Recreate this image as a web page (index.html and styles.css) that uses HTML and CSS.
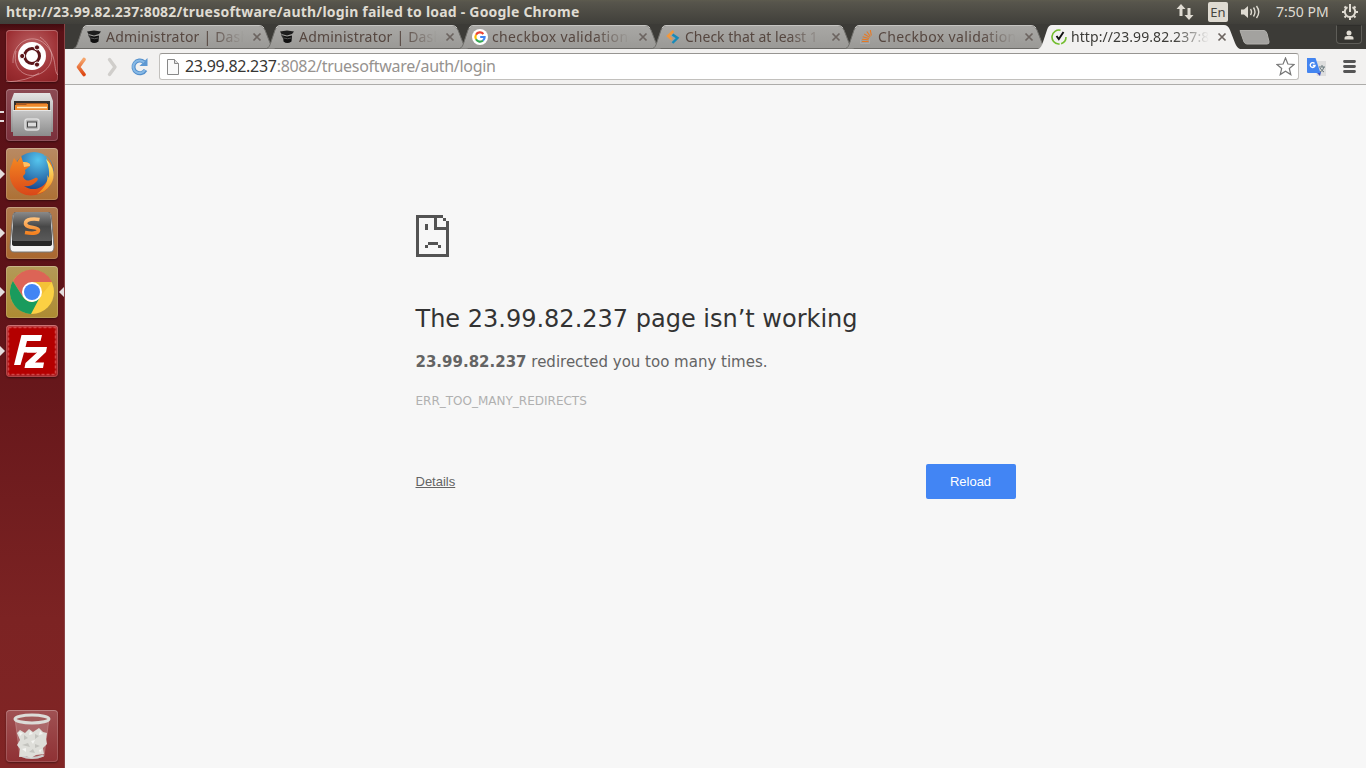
FILE: index.html
```
<!DOCTYPE html>
<html lang="en">
<head>
<meta charset="utf-8">
<title>23.99.82.237</title>
<link rel="stylesheet" href="styles.css">
</head>
<body>
<svg width="0" height="0" class="defs">
<defs>
<linearGradient id="tabfill" x2="0" y2="1"><stop stop-color="#a9a8a5"/><stop offset="1" stop-color="#9a9996"/></linearGradient>
<linearGradient id="orange" x2="0" y2="1"><stop stop-color="#f5a56c"/><stop offset="1" stop-color="#dd4814"/></linearGradient>
<linearGradient id="silver" x2="0" y2="1"><stop stop-color="#e4e4e4"/><stop offset="1" stop-color="#8d8d8d"/></linearGradient>
<linearGradient id="front" x2="0" y2="1"><stop stop-color="#c6c6c6"/><stop offset="1" stop-color="#8c8c8c"/></linearGradient>
<linearGradient id="fox" x2="0" y2="1"><stop stop-color="#f58b22"/><stop offset="1" stop-color="#d94719"/></linearGradient>
<linearGradient id="foxtail" x2="0" y2="1"><stop stop-color="#fff27a"/><stop offset="1" stop-color="#f28a1b"/></linearGradient>
<radialGradient id="globe" cx=".6" cy=".2" r=".8"><stop stop-color="#55c5ee"/><stop offset="1" stop-color="#143f88"/></radialGradient>
<linearGradient id="dark" x2="0" y2="1"><stop stop-color="#8a8a8a"/><stop offset=".5" stop-color="#484848"/><stop offset="1" stop-color="#5a5a5a"/></linearGradient>
<linearGradient id="amber" x2="0" y2="1"><stop stop-color="#ffc078"/><stop offset="1" stop-color="#f58220"/></linearGradient>
<symbol id="shape" viewBox="0 0 202 25"><path d="M.5 24.500C3 24 4 21 5 18L9 6Q10.500 1.500 14 1.500H186Q190 1.500 192 6L197 19Q199 24 201.500 24.500" fill="url(#tabfill)" stroke="#706f6b"/><path d="M10 4Q11.500 1.500 14 1.500H186Q189 1.500 191 4" fill="none" stroke="#c5c4c1"/></symbol>
<symbol id="shape-on" viewBox="0 0 202 25"><path d="M0 25C3 24 4 21 5 18L9 6Q10.500 1 14 1H186Q190 1 192 6L197 19Q199 24 202 25Z" fill="#f2f1f0"/></symbol>
<symbol id="x" viewBox="0 0 10 10"><path d="M1.500 1.500l7 7m0-7l-7 7" stroke="currentColor" stroke-width="1.700"/></symbol>
<symbol id="cap" viewBox="0 0 16 16"><path d="M1 2.500L8 1.500 15 2.500l-2 2.500-5 1.500L2.500 5z" fill="#1d1d1d"/><path d="M4 6.500l4 1 5-1-.5 6Q8 15.500 4.500 12.500z" fill="#101010"/><path d="M2 5l2.500 2L4 9.500 2.500 7z" fill="#333"/><path d="M5 9q3.500 1.500 7 0" stroke="#555" fill="none"/></symbol>
</defs>
</svg>

<header class="menubar">
  <h1 class="wintitle">http://23.99.82.237:8082/truesoftware/auth/login failed to load - Google Chrome</h1>
  <div class="indicators">
    <svg class="net" width="18" height="18" viewBox="0 0 18 18"><path d="M5 1l4.500 5H6.500v7h-3V6H.5zM13 17l-4.500-5h3V5h3v7h3z" fill="#dfdbd2"/></svg>
    <span class="lang">En</span>
    <svg class="vol" width="20" height="16" viewBox="0 0 20 16"><path d="M0 5.500h3L7 2v12L3 10.500H0z" fill="#dfdbd2"/><path d="M9.500 5q2 3 0 6M12.500 3.500q3 4.500 0 9M15.500 2q4.500 6 0 12" fill="none" stroke="#dfdbd2" stroke-width="1.400"/></svg>
    <span class="clock">7:50 PM</span>
    <svg class="gear" width="18" height="18" viewBox="0 0 18 18" fill="none" stroke="#dfdbd2"><path d="M6.500 4.200A5.200 5.200 0 1 0 11.500 4.200" stroke-width="2"/><path d="M9 1v8" stroke-width="2"/><path d="M5 5L3.500 3.500M13 5L14.500 3.500M3.800 9H1M14.200 9H17M5 13L3.500 14.500M13 13L14.500 14.500M9 14.500V17" stroke-width="2"/></svg>
  </div>
</header>

<div class="desktop">
<nav class="launcher">
  <div class="tile ubuntu"><svg viewBox="0 0 52 52"><g fill="none" stroke="#f0c5c5" opacity=".5"><path d="M7 33C6 12 26 2 39 14S47 41 52 45M10 21C5 42 24 51 37 42S48 17 34 7M0 52Q22 51 33 43"/></g><circle cx="26" cy="26" r="14" fill="#fff"/><circle cx="26" cy="26" r="7.500" fill="none" stroke="#5b1519" stroke-width="3"/><g fill="#5b1519" stroke="#fff" stroke-width="1"><circle cx="16.200" cy="26" r="2.600"/><circle cx="31" cy="17.400" r="2.600"/><circle cx="31" cy="34.600" r="2.600"/></g></svg></div>
  <div class="tile files two"><svg viewBox="0 0 52 52"><path d="M8 4h36l3 8v31H5V12z" fill="url(#silver)"/><path d="M8 12h36v11H8z" fill="#33302e"/><path d="M10 14h31v9H10z" fill="#a95b23"/><path d="M9 16h11l1-1h21v7H9z" fill="#f08a2c"/><path d="M11 18.500h30" stroke="#fff0c8" stroke-width="1.500"/><path d="M7 21h38v26H7z" fill="url(#front)"/><path d="M7 21.500h38" stroke="#e6e6e6"/><rect x="19" y="30" width="14" height="11" rx="2.500" fill="#b5b5b5" stroke="#dedede" stroke-width="1.500"/><rect x="21.500" y="33" width="9" height="5" fill="#ddd" stroke="#444"/></svg></div>
  <div class="tile firefox run"><svg viewBox="0 0 52 52"><circle cx="28" cy="24" r="20" fill="url(#globe)"/><path d="M38 7C49 14 51 31 42 40 36 47 24 50 15 45 4 39 1 26 6 16L8 10l3 4 4-6 2 6c4 0 8 1 7 4l-5 4c1 3 0 4-2 6 1 5 6 6 12 2 3-1 4 2 1 4-4 4-8 5-12 4 8 6 20 3 24-7 3-8 2-16-3-24z" fill="url(#fox)"/><path d="M40 11c8 8 10 17 5 25-4 6-9 9-14 10 8-6 12-14 10-19l2 3q1-9-3-19z" fill="url(#foxtail)"/><path d="M16 9l1 5c4 0 8 1 7 4l-6 1z" fill="#ffc064"/></svg></div>
  <div class="tile sublime run"><svg viewBox="0 0 52 52"><path d="M9 6h34q2 0 2.300 3L48 40q0 5-4 5H8q-4 0-4-5L6.700 9Q7 6 9 6z" fill="#f3f3f3" stroke="#777"/><path d="M10 5h32q2 0 2.200 2L46 34v3q0 2-3 2H9q-3 0-3-2v-3L7.800 7Q8 5 10 5z" fill="#262626"/><path d="M10 5h32q2 0 2.200 2L46 32q0 2-3 2H9q-3 0-3-2L7.800 7Q8 5 10 5z" fill="url(#dark)"/><path d="M33.500 12.500c-5-1-14-1-14 4 0 5 13 3 13 6.500 0 4-8 3.500-13.500 2.500" fill="none" stroke="url(#amber)" stroke-width="3.600"/></svg></div>
  <div class="tile chrome run focus"><svg viewBox="0 0 52 52"><circle cx="26" cy="26" r="22" fill="#fbd043"/><path d="M6.900 15A22 22 0 0 1 46 16H26L17 31z" fill="#dc6456"/><path d="M6.900 15A22 22 0 0 0 25 48l9-17q-9 10-17 0z" fill="#199b5d"/><path d="M34 31L46 16H26z" fill="#f4c137"/><circle cx="26" cy="26" r="10" fill="#fff"/><circle cx="26" cy="26" r="8" fill="#4285f4"/></svg></div>
  <div class="tile filezilla run"><svg viewBox="0 0 52 52"><rect x="2.500" y="2.500" width="47" height="47" fill="#b40000" stroke="#d04545" stroke-width="1.500" stroke-dasharray="3 2"/><path d="M15.500 10H36l-1.500 6H21l-1.500 6H31l-1 5.500H18L14.500 40H8z" fill="#fff"/><path d="M22 22h19l-1 5-11 10.500h9L37 43H18.500l1-5L31 27.500H21z" fill="#fff"/></svg></div>
  <div class="tile trash"><svg viewBox="0 0 52 52"><path d="M9 9l5 37q12 5 24 0l5-37z" fill="#d5b5b5" fill-opacity=".3" stroke="#c99" stroke-opacity=".5"/><path d="M14.500 45.500q11.500 5 23 0" fill="none" stroke="#ccc" stroke-width="2"/><path d="M11 23l3-3 5 3 4-4 4 3 6-4 4 4 4 1-1 6 1 5-4 4 1 6-8 1-5 3-5-2-7 1 1-8-3-4 3-5z" fill="#deded9"/><g fill="#c3c3be"><path d="M18 25l4 3-4 2zM29 24l4 2-4 3zM16 35l6-2 2 4zM29 34l5 2-5 2zM23 42l4-3 2 4z"/></g><g fill="#f4f4f1"><path d="M13 22l4 1-3 3zM24 21l3 3-4 1zM34 21l3 3-4 1zM16 39l4-1v4zM25 31l4-1-2 4zM33 40l3-1-2 4z"/></g><ellipse cx="26" cy="9" rx="17" ry="4" fill="#a15b5b" stroke="#dcdcd8" stroke-width="3"/></svg></div>
</nav>

<section class="browser">
  <div class="tabs">
    <div class="tab"><svg class="shape"><use href="#shape"/></svg><svg class="fav"><use href="#cap"/></svg><span class="label adm">Administrator | Dash</span><svg class="close"><use href="#x"/></svg></div>
    <div class="tab"><svg class="shape"><use href="#shape"/></svg><svg class="fav"><use href="#cap"/></svg><span class="label adm">Administrator | Dash</span><svg class="close"><use href="#x"/></svg></div>
    <div class="tab"><svg class="shape"><use href="#shape"/></svg><svg class="fav" viewBox="0 0 16 16"><circle cx="8" cy="8" r="8" fill="#fff"/><g fill="none" stroke-width="2.200"><path d="M4 5.700A4.600 4.600 0 0 1 11.400 4.900" stroke="#ea4335"/><path d="M4 5.700A4.600 4.600 0 0 0 4 10.300" stroke="#fbbc05"/><path d="M4 10.300A4.600 4.600 0 0 0 11 11.500" stroke="#34a853"/><path d="M11 11.500Q12.700 10 12.600 8H8.200" stroke="#4285f4"/></g></svg><span class="label chk">checkbox validation</span><svg class="close"><use href="#x"/></svg></div>
    <div class="tab"><svg class="shape"><use href="#shape"/></svg><svg class="fav" viewBox="0 0 16 16" fill="none" stroke-width="2.400"><path d="M8.500 2L3 7l4 3.500" stroke="#f0983e"/><path d="M7.500 5.500l5 3.500-5 5" stroke="#188ab8"/></svg><span class="label">Check that at least 1</span><svg class="close"><use href="#x"/></svg></div>
    <div class="tab"><svg class="shape"><use href="#shape"/></svg><svg class="fav" viewBox="0 0 16 16" fill="none"><path d="M2.500 10.500v4h9v-4" stroke="#aaa"/><path d="M4 12.500h6.500M4 10.300l6.500.5M4.700 7.700l6.200 1.800M6.200 5l5.500 3.400M8.800 2.500l3.600 5M12.300 1l1 5.500" stroke="#e87922" stroke-width="1.100"/></svg><span class="label chk">Checkbox validation</span><svg class="close"><use href="#x"/></svg></div>
    <div class="tab on"><svg class="shape"><use href="#shape-on"/></svg><svg class="fav" viewBox="0 0 16 16" fill="none"><path d="M9.500 1.200A7 7 0 1 0 15 8" stroke="#72bd2d" stroke-width="1.600" stroke-dasharray="24 1.500"/><path d="M5.500 7l2.300 3 4.700-7" stroke="#111" stroke-width="1.900"/></svg><span class="label url">http://23.99.82.237:8</span><svg class="close"><use href="#x"/></svg></div>
    <svg class="newtab" width="31" height="15" viewBox="0 0 31 15"><path d="M1 .5h24q2 0 3 3l2 8q.5 2.500-2 2.500H8q-2 0-3-2z" fill="#a3a29f" stroke="#b0afab"/></svg>
    <div class="user"><svg width="10" height="10" viewBox="0 0 10 10"><circle cx="5" cy="3" r="2.500" fill="#dfdbd2"/><path d="M.5 9.500V8q0-2 3-2h3q3 0 3 2v1.500z" fill="#dfdbd2"/></svg></div>
  </div>
  <div class="toolbar">
    <svg class="back" width="12" height="20" viewBox="0 0 12 20"><path d="M9 2.500L3.500 10 9 17.500" fill="none" stroke="url(#orange)" stroke-width="3.600" stroke-linejoin="round" stroke-linecap="round"/></svg>
    <svg class="fwd" width="12" height="20" viewBox="0 0 12 20"><path d="M2.500 2.500L8 10l-5.500 7.500" fill="none" stroke="#d0cecb" stroke-width="3.400" stroke-linejoin="round" stroke-linecap="round"/></svg>
    <svg class="reload" width="19" height="19" viewBox="0 0 19 19"><path d="M14 5A6.400 6.400 0 1 0 15.500 13" fill="none" stroke="#5590cc" stroke-width="4"/><path d="M17.500 1v8h-8z" fill="#5d98d2"/><path d="M14 5.300A6.300 6.300 0 1 0 15 13" fill="none" stroke="#87b9e5" stroke-width="2"/></svg>
    <div class="omnibox">
      <svg width="12" height="16" viewBox="0 0 12 16"><path d="M.5.500h7l4 4v11H.5z" fill="#fafafa" stroke="#888"/><path d="M7.500.500v4h4" fill="#ddd" stroke="#888"/></svg>
      <span class="address"><b>23.99.82.237</b>:8082/truesoftware/auth/login</span>
      <svg class="star" width="19" height="19" viewBox="0 0 19 19"><path d="M9.500 1l2.400 6 6.100.5-4.700 4 1.500 6.100-5.300-3.400-5.300 3.400 1.500-6.100L1 7.500 7.100 7z" fill="#fff" stroke="#777" stroke-width="1.200"/></svg>
    </div>
    <svg class="translate" width="20" height="20" viewBox="0 0 20 20"><path d="M6 4h13v15H10z" fill="#dedede"/><path d="M9 15h5l-1 4z" fill="#3f51c0"/><path d="M0 1h8.500l5 15H1q-1 0-1-1z" fill="#4485f0"/><path d="M7.500 6.500A2.400 2.400 0 1 0 8 8.500H5.800" fill="none" stroke="#fff" stroke-width="1.400"/><path d="M12 10h6M15 8v2M17 10q-1 4-4 5M13 11q2 3 4 4" fill="none" stroke="#66777b"/></svg>
    <svg class="burger" width="13" height="13" viewBox="0 0 13 13"><path d="M1.500 1.500h10M1.500 6.500h10M1.500 11.500h10" stroke="#555" stroke-width="2.800" stroke-linecap="round"/></svg>
  </div>
  <main class="page">
    <div class="error">
      <svg class="sad" width="33" height="42" viewBox="0 0 33 42" shape-rendering="crispEdges"><path d="M0 0h27v3h-6v9h9v-6h3v36H0zM3 3v36h27V15H18V3zM27 3h3v3h-3zM9 9h3v6H9zM12 27h10v3H12zM9 30h3v3H9zM22 30h3v3h-3z" fill="#535353" fill-rule="evenodd"/></svg>
      <h2>The 23.99.82.237 page isn’t working</h2>
      <p class="reason"><strong>23.99.82.237</strong> redirected you too many times.</p>
      <div class="code">ERR_TOO_MANY_REDIRECTS</div>
      <div class="actions"><a class="details">Details</a><button class="retry">Reload</button></div>
    </div>
  </main>
</section>
</div>
</body>
</html>
```
FILE: styles.css
```
* { box-sizing: border-box; }
body { margin: 0; width: 1366px; height: 768px; overflow: hidden; display: flex; flex-direction: column; font-family: "Noto Sans", "Open Sans", sans-serif; background: #3c3b37; }
.defs { position: absolute; }
svg { display: block; flex: none; }

.menubar { height: 24px; flex: none; display: flex; align-items: center; justify-content: space-between; padding: 0 7px 0 6px; background: linear-gradient(#5d5b4e 0, #57554c 10%, #403f3a 100%); color: #dfdbd2; }
.wintitle { margin: 0; font-size: 14px; line-height: 24px; font-weight: 700; white-space: nowrap; letter-spacing: 0.210px; }
.indicators { display: flex; align-items: center; }
.lang { width: 20px; height: 20px; margin-left: 14px; border-radius: 2px; background: #dfdbd2; color: #45443f; font-size: 13px; line-height: 20px; text-align: center; }
.vol { margin-left: 13px; }
.clock { width: 54px; margin-left: 15px; font-size: 14px; line-height: 24px; white-space: nowrap; letter-spacing: 0; }
.gear { margin-left: 11px; }

.desktop { flex: 1; min-height: 0; display: flex; }
.launcher { width: 65px; flex: none; display: flex; flex-direction: column; gap: 7px; padding: 6px 0 6px 6px; background: linear-gradient(#420b0f 0, #5b1217 8px, #5c1218 30%, #64161a 45%, #7c2323 80%, #812525 100%); border-right: 1px solid #8b4345; }
.tile { position: relative; width: 52px; height: 52px; flex: none; border-radius: 4px; box-shadow: inset 0 0 0 1px rgba(255,255,255,.16), inset 0 1px 0 rgba(255,255,255,.15), 0 1px 2px rgba(0,0,0,.4); }
.tile svg { width: 52px; height: 52px; }
.ubuntu { background: radial-gradient(circle at 50% 35%, #bd6668, #9c2e32 65%, #8c2226); }
.files { background: linear-gradient(#8c4a53, #7b2f3b); }
.firefox { background: linear-gradient(#b98a63, #ad7135); }
.sublime { background: linear-gradient(#b07b4f, #a9672f); }
.chrome { background: linear-gradient(#b39a58, #ad8b32); }
.filezilla { background: linear-gradient(#b43a3d, #a32023); }
.trash { margin-top: auto; background: linear-gradient(#a05153, #8f3134); }
.run::before { content: ""; position: absolute; left: -6px; top: 21px; border: 5px solid transparent; border-left-color: #e4dede; border-right: 0; }
.two::before { content: ""; position: absolute; left: -6px; top: 22px; width: 4px; height: 7px; border: solid #e4dede; border-width: 2px 0; }
.focus::after { content: ""; position: absolute; right: -6px; top: 21px; border: 5px solid transparent; border-right-color: #e4dede; border-left: 0; }

.browser { flex: 1; min-width: 0; display: flex; flex-direction: column; }
.tabs { height: 25px; flex: none; display: flex; padding-left: 8px; background: #3c3b37; }
.tab { position: relative; width: 193px; flex: none; display: flex; align-items: center; padding-left: 13px; color: #564740; }
.tab > * { position: relative; }
.tab .shape { position: absolute; left: 0; top: 0; width: 202px; height: 25px; }
.tab.on { z-index: 2; color: #3c3b37; }
.fav { width: 16px; height: 16px; }
.label { width: 142px; margin-left: 4px; white-space: nowrap; font-size: 14px; line-height: 25px; -webkit-mask-image: linear-gradient(90deg, #000 103px, transparent 138px); mask-image: linear-gradient(90deg, #000 103px, transparent 138px); }
.adm { letter-spacing: 0.200px; }
.chk { letter-spacing: 0.350px; }
.url { letter-spacing: 0.080px; }
.close { width: 10px; height: 10px; margin-left: 4px; color: #6c6460; }
.newtab { margin: 6px 0 0 8px; }
.user { width: 26px; height: 19px; margin: 1px 4px 0 auto; display: flex; align-items: center; justify-content: center; border: 1px solid #5e5d58; border-top-color: #2f2e2b; border-radius: 0 0 4px 4px; background: #353430; }

.toolbar { height: 36px; flex: none; display: flex; align-items: center; padding: 0 10px; background: #f2f1f0; border-bottom: 1px solid #adacaa; }
.fwd { margin-left: 20px; }
.reload { margin-left: 11px; }
.omnibox { width: 1140px; height: 27px; margin-left: 10px; display: flex; align-items: center; padding: 0 3px 0 7px; background: #fff; border: 1px solid #c2c0bd; border-top-color: #979592; border-radius: 3px; }
.address { flex: 1; margin-left: 6px; font-size: 16px; line-height: 25px; color: #96928f; white-space: nowrap; letter-spacing: -0.300px; }
.address b { font-weight: 400; color: #373634; }
.translate { margin-left: 8px; }
.burger { margin-left: 16px; }

.page { flex: 1; background: #f7f7f7; padding: 130px 0 0 350.500px; font-family: "DejaVu Sans", sans-serif; color: #646464; }
.error { width: 600px; }
.error h2 { margin: 46px 0 0; font-size: 24px; line-height: 32px; font-weight: 400; color: #333; white-space: nowrap; }
.reason { margin: 15px 0 0; font-size: 15px; line-height: 24px; white-space: nowrap; }
.code { margin-top: 17px; font-size: 12px; line-height: 20px; color: #b0b0b0; }
.actions { display: flex; align-items: center; justify-content: space-between; margin-top: 53px; font-family: "Liberation Sans", Arial, sans-serif; font-size: 13px; }
.details { text-decoration: underline; }
.retry { width: 90px; height: 35px; padding: 0; border: 0; border-radius: 2px; background: #4285f4; color: #fff; font: inherit; }
```
